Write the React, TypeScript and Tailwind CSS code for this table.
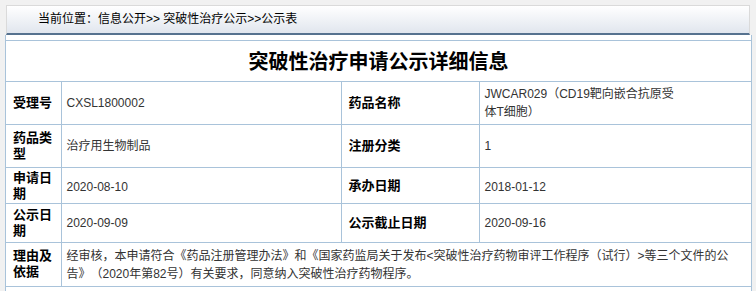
import React from "react";

const label = "font-bold text-[13px] leading-[16px] text-black";
const val = "text-[12px] leading-[18px] text-[#333]";
const cellL = "border border-[#a9c3da] pl-[7px] pr-[4px] align-middle";
const cellV = "border border-[#a9c3da] pl-[5px] pr-[4px] align-middle";

export default function App() {
  return (
    <div
      className="w-[756px] h-[291px] overflow-hidden bg-[#f1f1f1] pl-[5px] pr-[4px] pt-[5px] [text-spacing-trim:space-all]"
      style={{ fontFamily: '"Liberation Sans", "Noto Sans CJK SC", sans-serif' }}
    >
      <div className="mr-[2px] ml-[1px] h-[30px] border border-[#dadada] border-b-2 border-b-[#56728f] bg-gradient-to-b from-white to-[#e1e6ee] pl-[31px] text-[12px] leading-[27px] text-black">
        当前位置：信息公开&gt;&gt; 突破性治疗公示&gt;&gt;公示表
      </div>
      <div className="h-[260px] border-x border-[#a9c3da] bg-white pt-[5px]">
        <table className="w-full table-fixed border-collapse">
          <colgroup>
            <col className="w-[55px]" />
            <col className="w-[280px]" />
            <col className="w-[138px]" />
            <col />
          </colgroup>
          <tbody>
            <tr className="h-[41px]">
              <td colSpan={4} className="border border-[#a9c3da] border-l-0 border-r-0 text-center text-[20px] font-bold text-black" style={{ fontFamily: '"Noto Sans CJK SC", sans-serif' }}>
                突破性治疗申请公示详细信息
              </td>
            </tr>
            <tr className="h-[43px]">
              <td className={cellL + " border-l-0"}><div className={label}>受理号</div></td>
              <td className={cellV}><div className={val}>CXSL1800002</div></td>
              <td className={cellL}><div className={label}>药品名称</div></td>
              <td className={cellV + " border-r-0"}>
                <div className={val}>
                  JWCAR029（CD19靶向嵌合抗原受<br />体T细胞）
                </div>
              </td>
            </tr>
            <tr className="h-[43px]">
              <td className={cellL + " border-l-0"}><div className={label}>药品类<br />型</div></td>
              <td className={cellV}><div className={val}>治疗用生物制品</div></td>
              <td className={cellL}><div className={label}>注册分类</div></td>
              <td className={cellV + " border-r-0"}><div className={val}>1</div></td>
            </tr>
            <tr className="h-[36px]">
              <td className={cellL + " border-l-0"}><div className={label}>申请日<br />期</div></td>
              <td className={cellV}><div className={val + " pt-[3px]"}>2020-08-10</div></td>
              <td className={cellL}><div className={label}>承办日期</div></td>
              <td className={cellV + " border-r-0"}><div className={val + " pt-[3px]"}>2018-01-12</div></td>
            </tr>
            <tr className="h-[39px]">
              <td className={cellL + " border-l-0"}><div className={label}>公示日<br />期</div></td>
              <td className={cellV}><div className={val}>2020-09-09</div></td>
              <td className={cellL}><div className={label}>公示截止日期</div></td>
              <td className={cellV + " border-r-0"}><div className={val}>2020-09-16</div></td>
            </tr>
            <tr className="h-[44px]">
              <td className={cellL + " border-l-0"}><div className={label + " -mt-[2px]"}>理由及<br />依据</div></td>
              <td colSpan={3} className={cellV + " border-r-0"}>
                <div className={val}>
                  经审核，本申请符合《药品注册管理办法》和《国家药监局关于发布&lt;突破性治疗药物审评工作程序（试行）&gt;等三个文件的公<br />告》（2020年第82号）有关要求，同意纳入突破性治疗药物程序。
                </div>
              </td>
            </tr>
          </tbody>
        </table>
      </div>
    </div>
  );
}
